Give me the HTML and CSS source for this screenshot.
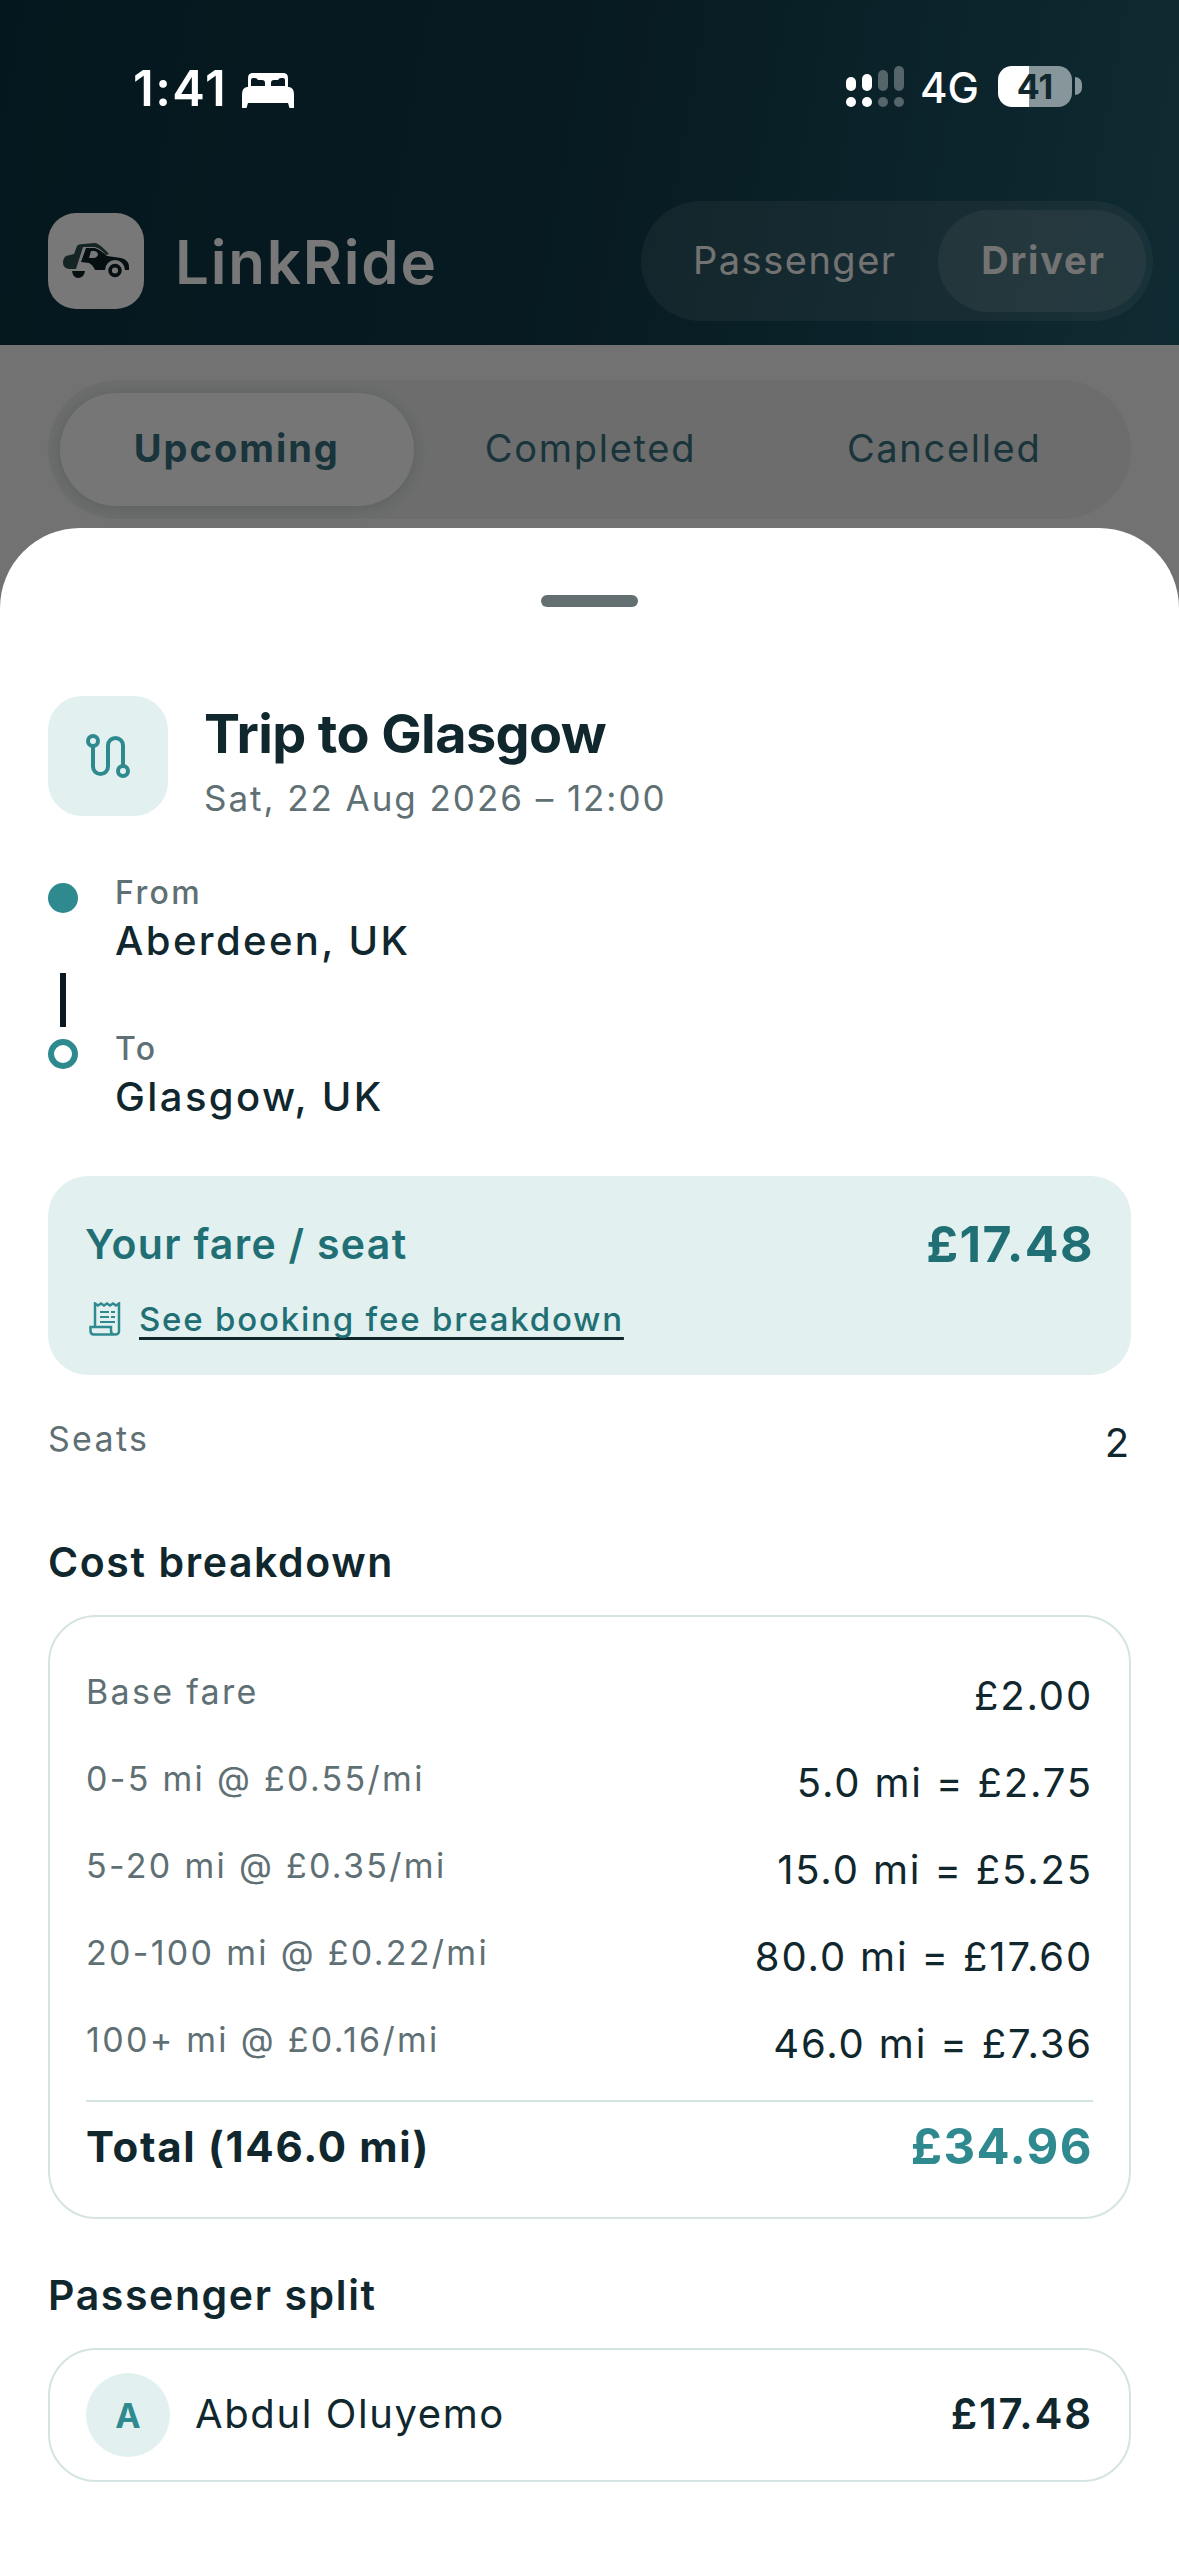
FILE: index.html
```html
<!DOCTYPE html>
<html lang="en">
<head>
    <meta charset="UTF-8">
    <meta name="viewport" content="width=device-width, initial-scale=1.0">
    <title>LinkRide - Trip to Glasgow</title>
    <link rel="stylesheet" href="styles.css">
</head>
<body>
    <div class="screen">
        <header class="app-header">
            <div class="status-bar">
                <div class="status-left">
                    <span class="clock">1:41</span>
                    <svg class="bed-icon" viewBox="0 0 52 35" width="52" height="35">
                        <path fill="#fff" fill-rule="evenodd" d="M11 0H41Q46 0 46 5V14H47Q52 15 52 21V35H47.5L46 30H6L4.5 35H0V21Q0 15 5 14H6V5Q6 0 11 0ZM11 5Q9 5 9 7V13H23V10Q23 7 20 7H16Q15 5 13 5ZM39 5Q37 5 36 7H32Q29 7 29 10V13H43V7Q43 5 41 5Z"/>
                    </svg>
                </div>
                <div class="status-right">
                    <div class="signal">
                        <span class="signal-col"><i class="bar bar-1"></i><i class="pip"></i></span>
                        <span class="signal-col"><i class="bar bar-2"></i><i class="pip"></i></span>
                        <span class="signal-col off"><i class="bar bar-3"></i><i class="pip"></i></span>
                        <span class="signal-col off"><i class="bar bar-4"></i><i class="pip"></i></span>
                    </div>
                    <span class="network">4G</span>
                    <div class="battery">
                        <div class="battery-body"><span class="battery-level">41</span></div>
                        <span class="battery-nub"></span>
                    </div>
                </div>
            </div>
            <div class="top-row">
                <div class="brand">
                    <div class="brand-tile">
                        <svg viewBox="0 0 66 36" width="66" height="36">
                            <path fill="#2e4d50" d="M0 20Q0 15 3 13L11 11L14 3Q15 1 20 1L32 0Q36 0 46 11L43 12Q37 5 32 4H20L13 26H6Q0 25 0 20Z"/>
                            <path fill="#0c2028" fill-rule="evenodd" d="M23 5H32Q36 6 44 13L58 15Q66 17 66 24V27H62A10 10 0 0 0 42 27H32Q30 22 26 20L18 19ZM28 8L26 15H31Q35 14 35 11Q34 8 31 8Z"/>
                            <path fill="#0c2028" d="M9 28H22Q21 35 15 35Q10 35 9 28Z"/>
                            <circle cx="52" cy="27.5" r="4.9" fill="none" stroke="#0c2028" stroke-width="3.7"/>
                        </svg>
                    </div>
                    <span class="brand-name">LinkRide</span>
                </div>
                <div class="role-toggle">
                    <span class="role">Passenger</span>
                    <span class="role role-active">Driver</span>
                </div>
            </div>
        </header>

        <nav class="tabs">
            <span class="tab tab-active">Upcoming</span>
            <span class="tab">Completed</span>
            <span class="tab">Cancelled</span>
        </nav>

        <div class="scrim"></div>

        <section class="sheet">
            <div class="handle"></div>

            <div class="trip-head">
                <div class="trip-tile">
                    <svg viewBox="0 0 44 44" width="44" height="44" fill="none" stroke="#2f8a90" stroke-width="4">
                        <circle cx="7" cy="7" r="5"/>
                        <circle cx="37" cy="37" r="5"/>
                        <path d="M7 12V32.5A7.5 7.5 0 0 0 22 32.5V11.5A7.5 7.5 0 0 1 37 11.5V32"/>
                    </svg>
                </div>
                <div class="trip-text">
                    <h1 class="trip-title">Trip to Glasgow</h1>
                    <p class="trip-date">Sat, 22 Aug 2026 – 12:00</p>
                </div>
            </div>

            <div class="route">
                <div class="stop stop-from">
                    <div class="marker">
                        <span class="dot"></span>
                        <span class="connector"></span>
                    </div>
                    <div>
                        <div class="stop-label">From</div>
                        <div class="stop-place">Aberdeen, UK</div>
                    </div>
                </div>
                <div class="stop">
                    <div class="marker">
                        <span class="dot dot-ring"></span>
                    </div>
                    <div>
                        <div class="stop-label">To</div>
                        <div class="stop-place">Glasgow, UK</div>
                    </div>
                </div>
            </div>

            <div class="fare-card">
                <div class="fare-row">
                    <span class="fare-label">Your fare / seat</span>
                    <span class="fare-price">£17.48</span>
                </div>
                <div class="fare-link">
                    <svg viewBox="0 0 32 34" width="32" height="34" fill="none" stroke="#2f8a90" stroke-width="2.5">
                        <path d="M6 25V1.5L9 3.5L12 1.5L15 3.5L18 1.5L21 3.5L24 1.5L27 3.5L30 1.5V29Q30 32.5 26 32.5H5Q1.5 32.5 1.5 29V25H22V29Q22 32 25 32.5"/>
                        <path d="M11 10H20M22 10H26M11 15H20M22 15H26M11 20H26" stroke-width="2"/>
                    </svg>
                    <span class="fare-link-text">See booking fee breakdown</span>
                </div>
            </div>

            <div class="line-row seats-row">
                <span class="line-label">Seats</span>
                <span class="line-value">2</span>
            </div>

            <h2 class="section-title">Cost breakdown</h2>
            <div class="panel cost-panel">
                <div class="line-row">
                    <span class="line-label">Base fare</span>
                    <span class="line-value">£2.00</span>
                </div>
                <div class="line-row">
                    <span class="line-label">0-5 mi @ £0.55/mi</span>
                    <span class="line-value">5.0 mi = £2.75</span>
                </div>
                <div class="line-row">
                    <span class="line-label">5-20 mi @ £0.35/mi</span>
                    <span class="line-value">15.0 mi = £5.25</span>
                </div>
                <div class="line-row">
                    <span class="line-label">20-100 mi @ £0.22/mi</span>
                    <span class="line-value">80.0 mi = £17.60</span>
                </div>
                <div class="line-row">
                    <span class="line-label">100+ mi @ £0.16/mi</span>
                    <span class="line-value">46.0 mi = £7.36</span>
                </div>
                <div class="total-row">
                    <span class="total-label">Total (146.0 mi)</span>
                    <span class="total-value">£34.96</span>
                </div>
            </div>

            <h2 class="section-title split-title">Passenger split</h2>
            <div class="panel split-panel">
                <span class="avatar">A</span>
                <span class="split-name">Abdul Oluyemo</span>
                <span class="split-amount">£17.48</span>
            </div>
        </section>
    </div>
</body>
</html>
```

FILE: styles.css
```css
* {
    box-sizing: border-box;
}
body {
    margin: 0;
    font-family: Inter, "Noto Sans", sans-serif;
    background-color: #fff;
}
.screen {
    position: relative;
    width: 1179px;
    height: 2556px;
    overflow: hidden;
    background-color: #f0f3f0;
}

/* header */
.app-header {
    height: 345px;
    background: linear-gradient(100deg, #0a3240 0%, #103a48 50%, #215b6b 100%);
}
.status-bar {
    position: relative;
    z-index: 2;
    height: 213px;
    padding: 64px 97px 0 133px;
    display: flex;
    justify-content: space-between;
    align-items: flex-start;
    color: #fff;
}
.status-left {
    display: flex;
    align-items: center;
    gap: 15px;
    height: 42px;
}
.clock {
    font-size: 49px;
    line-height: 42px;
    font-weight: 600;
    letter-spacing: 1.5px;
    position: relative;
    top: 4px;
}
.bed-icon {
    margin-top: 10px;
}
.status-right {
    display: flex;
    align-items: center;
    height: 42px;
    padding-top: 2px;
}
.signal {
    display: flex;
    gap: 6px;
    height: 41px;
}
.signal-col {
    width: 10px;
    display: flex;
    flex-direction: column;
    justify-content: flex-end;
    gap: 6px;
}
.signal-col.off {
    opacity: 0.3;
}
.bar {
    display: block;
    width: 10px;
    border-radius: 5px;
    background-color: #fff;
}
.bar-1 { height: 14px; }
.bar-2 { height: 17px; }
.bar-3 { height: 21px; }
.bar-4 { height: 25px; }
.pip {
    display: block;
    width: 10px;
    height: 10px;
    border-radius: 50%;
    background-color: #fff;
}
.network {
    margin-left: 16px;
    font-size: 42px;
    line-height: 42px;
    font-weight: 500;
    position: relative;
    top: 2px;
}
.battery {
    margin-left: 19px;
    display: flex;
    align-items: center;
    gap: 3px;
}
.battery-body {
    width: 74px;
    height: 41px;
    border-radius: 14px;
    background: linear-gradient(90deg, #fff 0, #fff 31px, #87969a 31px);
    display: flex;
    align-items: center;
    justify-content: center;
}
.battery-level {
    font-size: 34px;
    font-weight: 700;
    color: #10272e;
}
.battery-nub {
    width: 7px;
    height: 18px;
    border-radius: 0 9px 9px 0;
    background-color: #87969a;
}
.top-row {
    height: 132px;
    padding: 0 26px 0 48px;
    display: flex;
    justify-content: space-between;
    align-items: flex-start;
}
.brand {
    display: flex;
    align-items: center;
    gap: 31px;
    height: 95px;
}
.brand-tile {
    width: 96px;
    height: 96px;
    border-radius: 28px;
    background-color: #fff;
    display: flex;
    align-items: center;
    justify-content: center;
}
.brand-name {
    font-size: 60px;
    font-weight: 600;
    letter-spacing: 1.8px;
    color: #fff;
    position: relative;
    top: 1px;
}
.role-toggle {
    width: 512px;
    height: 120px;
    margin-top: -12px;
    padding: 9px 7px;
    border-radius: 60px;
    background-color: rgba(255, 255, 255, 0.1);
    display: flex;
    align-items: center;
    justify-content: space-between;
}
.role {
    padding: 0 0 3px 45px;
    font-size: 38px;
    letter-spacing: 1.5px;
    color: #f4f4f4;
}
.role-active {
    width: 208px;
    height: 102px;
    padding: 0 0 3px 3px;
    border-radius: 51px;
    background-color: rgba(255, 255, 255, 0.13);
    display: flex;
    align-items: center;
    justify-content: center;
    font-weight: 700;
    letter-spacing: 1.8px;
}

/* tabs under the sheet */
.tabs {
    margin: 35px 48px 0;
    height: 139px;
    padding: 13px 10px 13px 12px;
    border-radius: 70px;
    background-color: #e5e8e5;
    display: grid;
    grid-template-columns: repeat(3, 1fr);
}
.tab {
    height: 113px;
    padding-bottom: 3px;
    border-radius: 57px;
    display: flex;
    align-items: center;
    justify-content: center;
    font-size: 38px;
    letter-spacing: 1.7px;
    color: #35707e;
}
.tab-active {
    background-color: #fafafa;
    box-shadow: 0 2px 14px rgba(20, 90, 100, 0.18);
    font-weight: 700;
    letter-spacing: 2px;
}
.scrim {
    position: absolute;
    inset: 0;
    z-index: 1;
    background-color: rgba(0, 0, 0, 0.53);
}

/* bottom sheet */
.sheet {
    position: absolute;
    z-index: 3;
    left: 0;
    right: 0;
    top: 528px;
    bottom: 0;
    padding: 67px 48px 0;
    background-color: #fff;
    border-radius: 80px 80px 0 0;
    color: #10272e;
}
.handle {
    width: 97px;
    height: 12px;
    margin: 0 auto 89px;
    border-radius: 6px;
    background-color: #646f71;
}
.trip-head {
    display: flex;
    gap: 36px;
    height: 124px;
}
.trip-tile {
    width: 120px;
    height: 120px;
    border-radius: 34px;
    background-color: #e2f0ef;
    display: flex;
    align-items: center;
    justify-content: center;
}
.trip-text {
    padding-top: 6px;
}
.trip-title {
    margin: 0 0 10px;
    font-size: 54px;
    line-height: 64px;
    font-weight: 700;
    letter-spacing: -0.6px;
}
.trip-date {
    margin: 0;
    font-size: 35px;
    line-height: 44px;
    letter-spacing: 1.95px;
    color: #5f7074;
}
.route {
    margin-top: 51px;
}
.stop {
    display: flex;
    gap: 37px;
}
.stop-from {
    height: 156px;
}
.marker {
    width: 30px;
    padding-top: 12px;
    display: flex;
    flex-direction: column;
    align-items: center;
}
.dot {
    width: 30px;
    height: 30px;
    flex: none;
    border-radius: 50%;
    background-color: #2f8a90;
}
.dot-ring {
    background-color: #fff;
    border: 6px solid #2f8a90;
}
.connector {
    width: 6px;
    height: 55px;
    margin-top: 60px;
    background-color: #0b1a20;
}
.stop-label {
    margin-top: 2px;
    font-size: 32px;
    line-height: 40px;
    font-weight: 500;
    letter-spacing: 2.4px;
    color: #5f7074;
}
.stop-place {
    margin-top: 4px;
    font-size: 40px;
    line-height: 48px;
    font-weight: 500;
    letter-spacing: 2.4px;
}
.fare-card {
    margin-top: 55px;
    height: 199px;
    padding: 37px 37px 0;
    border-radius: 40px;
    background-color: #e2f0ef;
}
.fare-row {
    display: flex;
    justify-content: space-between;
    align-items: center;
    height: 62px;
    color: #1f6f75;
}
.fare-label {
    font-size: 41px;
    font-weight: 600;
    letter-spacing: 1.3px;
}
.fare-price {
    font-size: 50px;
    font-weight: 700;
    letter-spacing: 1.4px;
}
.fare-link {
    margin-top: 22px;
    padding-left: 4px;
    height: 44px;
    display: flex;
    align-items: center;
    gap: 18px;
    color: #1f6f75;
}
.fare-link svg {
    flex: none;
}
.fare-link-text {
    font-size: 33px;
    font-weight: 500;
    letter-spacing: 1.8px;
    text-decoration: underline #10272e;
    text-decoration-thickness: 3px;
    text-decoration-skip-ink: none;
    text-underline-offset: 6px;
}
.line-row {
    display: flex;
    justify-content: space-between;
    align-items: flex-start;
    height: 54px;
}
.line-label {
    font-size: 34px;
    line-height: 44px;
    letter-spacing: 2.3px;
    color: #5f7074;
}
.line-value {
    font-size: 40px;
    line-height: 52px;
    letter-spacing: 1.85px;
}
.seats-row {
    margin-top: 42px;
}
.section-title {
    margin: 65px 0 27px;
    font-size: 41px;
    line-height: 52px;
    font-weight: 600;
    letter-spacing: 1.6px;
}
.split-title {
    margin-top: 50px;
}
.panel {
    border: 2px solid #d5e3e3;
    border-radius: 48px;
}
.cost-panel {
    height: 604px;
    padding: 53px 36px 0;
    display: flex;
    flex-direction: column;
    gap: 33px;
}
.total-row {
    margin-top: -5px;
    padding-top: 15px;
    border-top: 2px solid #d5e3e3;
    display: flex;
    justify-content: space-between;
    align-items: center;
    height: 76px;
}
.total-label {
    font-size: 42px;
    font-weight: 700;
    letter-spacing: 1.7px;
}
.total-value {
    font-size: 49px;
    font-weight: 700;
    letter-spacing: 1.4px;
    color: #2f8a90;
}
.split-panel {
    height: 134px;
    padding: 0 36px;
    display: flex;
    align-items: center;
}
.avatar {
    width: 84px;
    height: 84px;
    border-radius: 50%;
    background-color: #e2f0ef;
    color: #2f8a90;
    font-size: 34px;
    font-weight: 700;
    display: flex;
    align-items: center;
    justify-content: center;
}
.split-name {
    margin-left: 25px;
    padding-bottom: 4px;
    flex: 1;
    font-size: 40px;
    letter-spacing: 1.6px;
}
.split-amount {
    padding-bottom: 4px;
    font-size: 42px;
    font-weight: 600;
    letter-spacing: 1.8px;
}
```
